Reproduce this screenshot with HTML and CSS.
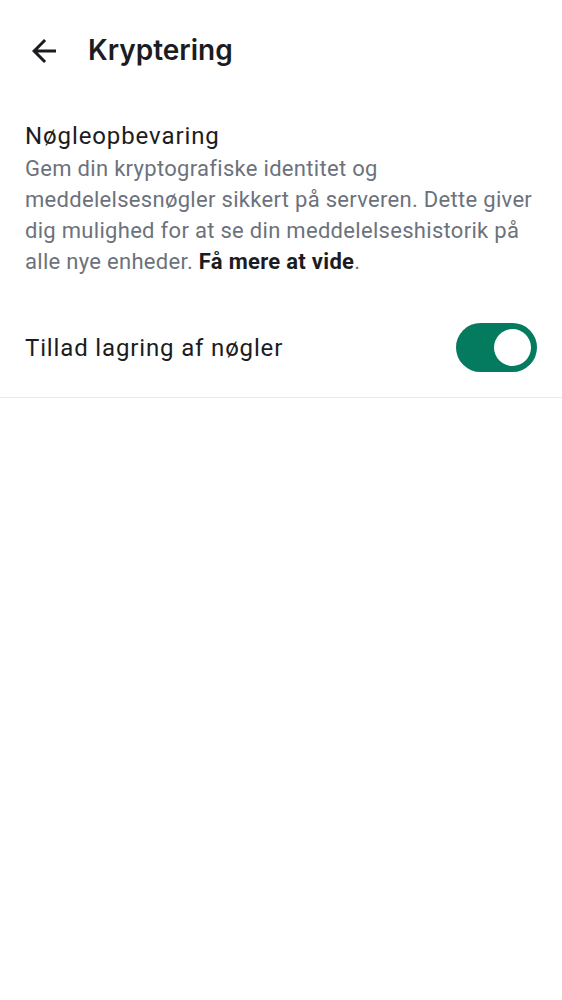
FILE: index.html
```html
<!DOCTYPE html>
<html lang="da">
<head>
<meta charset="utf-8">
<title>Kryptering</title>
<link rel="stylesheet" href="styles.css">
</head>
<body>
<header class="topbar">
  <button class="back" aria-label="Tilbage">
    <svg viewBox="0 0 24 24" width="36" height="36"><path d="M20 11H7.83l5.59-5.59L12 4l-8 8 8 8 1.41-1.41L7.83 13H20v-2z" fill="#1b1c21"/></svg>
  </button>
  <h1 class="title">Kryptering</h1>
</header>
<section class="block">
  <h2 class="heading">Nøgleopbevaring</h2>
  <p class="desc">Gem din kryptografiske identitet og meddelelsesnøgler sikkert på serveren. Dette giver dig mulighed for at se din meddelelseshistorik på alle nye enheder. <a class="link" href="#">Få mere at vide</a>.</p>
</section>
<div class="row">
  <span class="row-label">Tillad lagring af nøgler</span>
  <span class="switch"><span class="knob"></span></span>
</div>
</body>
</html>
```
FILE: styles.css
```css
* { box-sizing: border-box; }
body {
  margin: 0;
  background: #ffffff;
  font-family: Roboto, "Noto Sans", sans-serif;
  color: #1b1c21;
}
.topbar {
  height: 100px;
  display: flex;
  align-items: center;
  padding-left: 26px;
}
.back {
  width: 36px;
  height: 36px;
  padding: 0;
  border: 0;
  background: none;
  display: flex;
  margin-top: 2px;
}
.title {
  margin: 0 0 0 26px;
  font-family: Inter, Roboto, sans-serif;
  font-size: 28px;
  font-weight: 600;
  letter-spacing: 0;
  color: #1b1c21;
}
.block {
  padding: 20px 25px 0;
}
.heading {
  margin: 0;
  font-size: 24px;
  font-weight: 400;
  line-height: 32px;
  letter-spacing: 0.9px;
  color: #1b1c21;
}
.desc {
  margin: 1px 0 0;
  font-size: 22px;
  line-height: 31px;
  letter-spacing: 0.3px;
  color: #6c727c;
}
.link {
  color: #1b1c21;
  font-weight: 700;
  text-decoration: none;
}
.row {
  margin-top: 21px;
  height: 100px;
  display: flex;
  align-items: center;
  justify-content: space-between;
  padding: 0 25px;
  border-bottom: 1px solid #e9e9eb;
}
.row-label {
  font-size: 24px;
  letter-spacing: 0.85px;
  color: #1b1c21;
}
.switch {
  width: 81px;
  height: 49px;
  border-radius: 25px;
  background: #047a5e;
  display: flex;
  align-items: center;
  justify-content: flex-end;
  padding-right: 6px;
}
.knob {
  width: 37px;
  height: 37px;
  border-radius: 50%;
  background: #ffffff;
}
```
